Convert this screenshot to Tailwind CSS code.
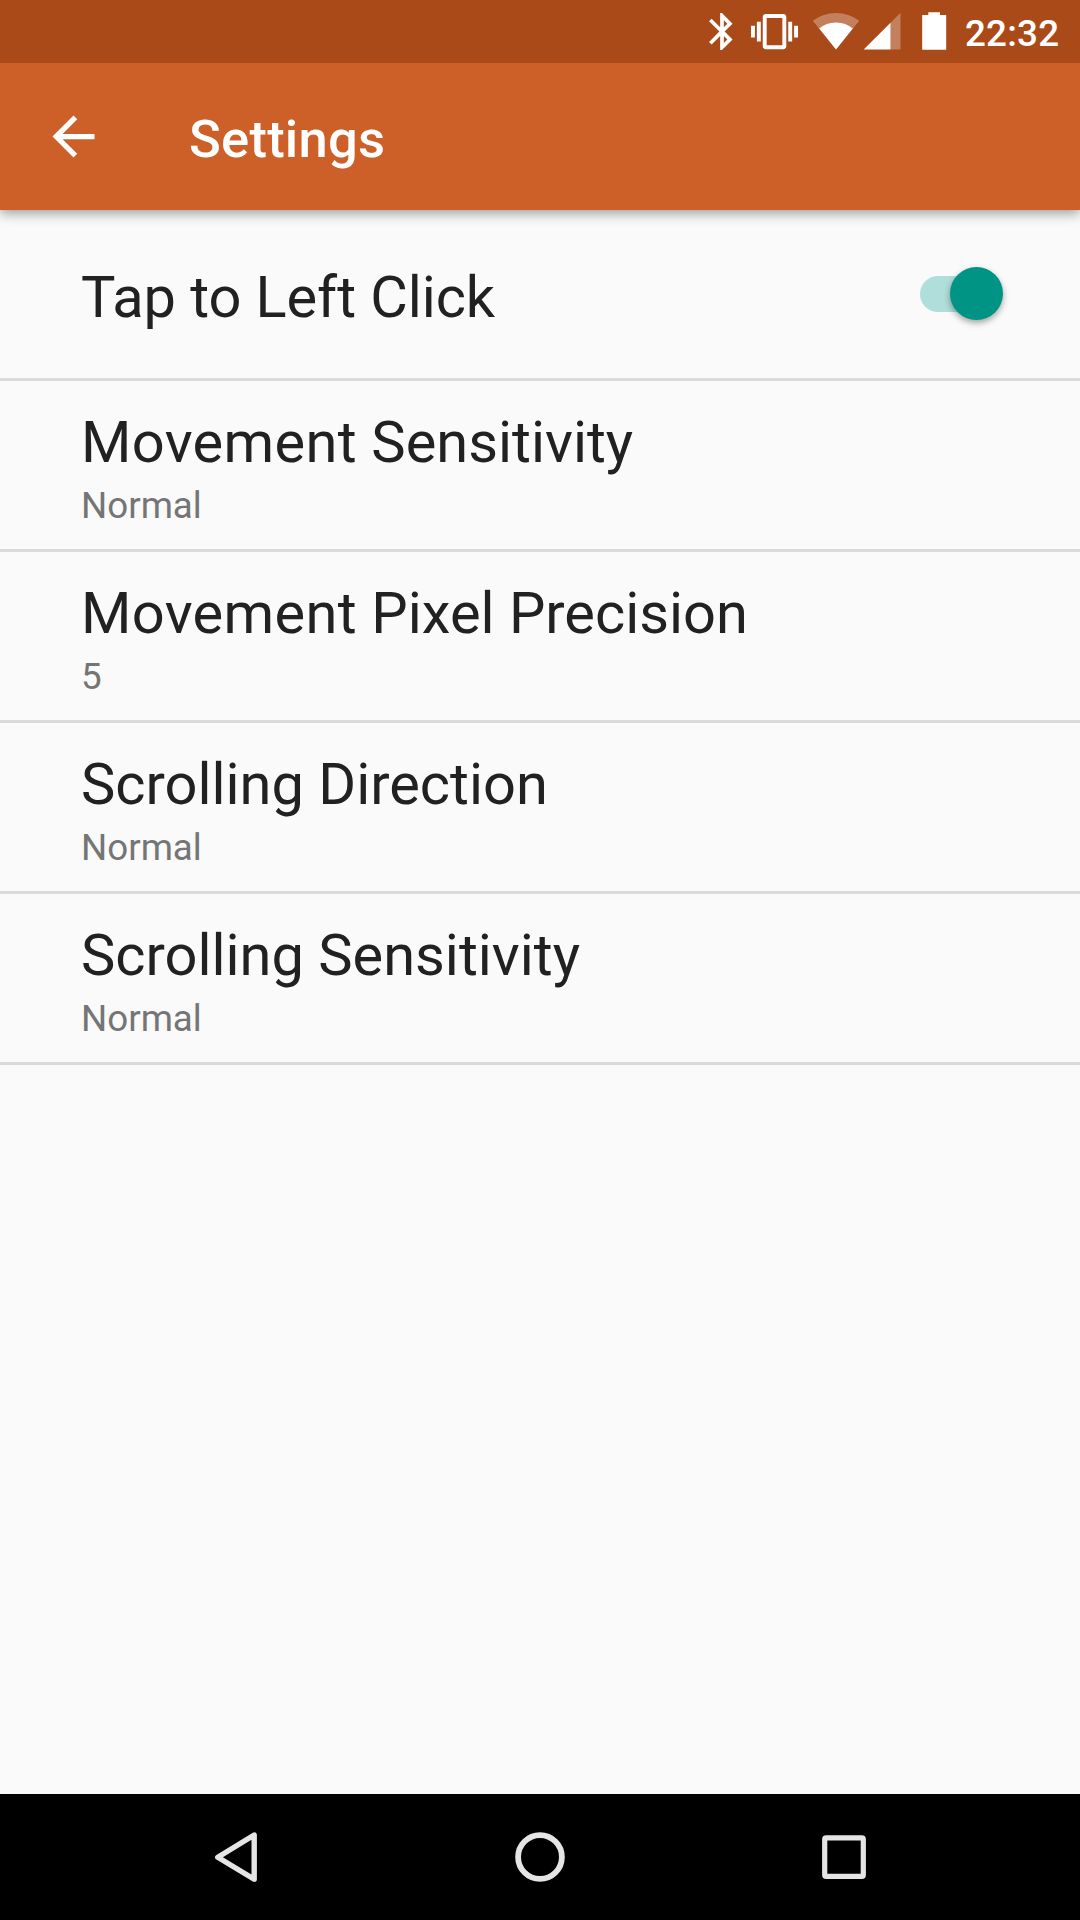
<!DOCTYPE html>
<html lang="en">
<head>
<meta charset="utf-8">
<title>Settings</title>
<script src="https://cdn.jsdelivr.net/npm/@tailwindcss/browser@4"></script>
</head>
<body class="font-['Roboto',sans-serif]">
<div class="flex h-[1920px] w-[1080px] flex-col overflow-hidden bg-[#fafafa]">
  <!-- Status bar -->
  <div class="relative z-10 flex h-[63px] shrink-0 items-start justify-end bg-[#aa4a18] text-white">
    <svg class="h-[63px] w-[255px] shrink-0" viewBox="700 0 255 63" fill="#fff">
      <path transform="translate(699.8 9.4) scale(1.85)" d="M17.71 7.71L12 2h-1v7.59L6.41 5 5 6.41 10.59 12 5 17.59 6.41 19 11 14.41V22h1l5.71-5.71-4.3-4.29 4.3-4.29zM13 5.83l1.88 1.88L13 9.59V5.83zm1.88 10.46L13 18.17v-3.76l1.88 1.88z"/>
      <path transform="translate(751 8.1) scale(1.96)" d="M0 15h2V9H0v6zm3 2h2V7H3v10zm19-8v6h2V9h-2zm-3 8h2V7h-2v10zM16.5 3h-9C6.67 3 6 3.67 6 4.5v15c0 .83.67 1.5 1.5 1.5h9c.83 0 1.5-.67 1.5-1.5v-15c0-.83-.67-1.5-1.5-1.5zM16 19H8V5h8v14z"/>
      <path fill-opacity=".3" d="M836 49.4L812.8 20.7Q823 13 836 13T859.2 20.7Z"/>
      <path d="M836 49.4L819.2 28.4Q826 22.4 836 22.4T852.8 28.4Z"/>
      <path fill-opacity=".3" d="M890.3 23V49.5H900.5V12.8Z"/>
      <path d="M863.7 49.5L890.5 22.8V49.5Z"/>
      <path d="M922.2 15H928.3V12.2H940V15H946.2V49.7H922.2Z"/>
    </svg>
    <span class="mt-3 w-[125px] pl-[10px] text-[36.75px] leading-[43px] font-medium tracking-[0.2px]">22:32</span>
  </div>
  <!-- App bar -->
  <div class="relative flex h-[147px] shrink-0 items-start bg-[#cd5f28] pl-[42px] text-white shadow-[0_3px_12px_rgba(0,0,0,0.4)]">
    <svg class="mt-[42px] size-[63px]" viewBox="0 0 24 24" fill="#fff"><path d="M20 11H7.83l5.59-5.59L12 4l-8 8 8 8 1.41-1.41L7.83 13H20v-2z"/></svg>
    <h1 class="ml-[84px] mt-[45px] text-[52.5px] leading-[62px] font-medium tracking-[0.25px]">Settings</h1>
  </div>
  <!-- Preferences -->
  <div class="flex grow flex-col text-[#212121]">
    <div class="flex h-[171px] items-start justify-between border-b-3 border-[#dadada] pr-[77px] pl-[81px]">
      <div class="mt-[53px] text-[57.75px] leading-[68px] tracking-[-0.07px]">Tap to Left Click</div>
      <div class="mt-[57px] flex h-[53px] w-[83px] items-center">
        <div class="flex h-9 w-[76px] items-center rounded-full bg-[#b0deda] pl-[30px]">
          <div class="size-[53px] shrink-0 rounded-full bg-[#009485] shadow-[0_3px_6px_rgba(0,0,0,0.35)]"></div>
        </div>
      </div>
    </div>
    <div class="h-[171px] border-b-3 border-[#dadada] pt-[27px] pl-[81px]">
      <div class="text-[57.75px] leading-[68px]"><span class="tracking-[0.35px]">Movement</span> Sensitivity</div>
      <div class="mt-2 text-[36.75px] leading-[43px] text-[#757575]">Normal</div>
    </div>
    <div class="h-[171px] border-b-3 border-[#dadada] pt-[27px] pl-[81px]">
      <div class="text-[57.75px] leading-[68px]"><span class="tracking-[0.35px]">Movement</span> Pixel Precision</div>
      <div class="mt-2 text-[36.75px] leading-[43px] text-[#757575]">5</div>
    </div>
    <div class="h-[171px] border-b-3 border-[#dadada] pt-[27px] pl-[81px]">
      <div class="text-[57.75px] leading-[68px]">Scrolling Direction</div>
      <div class="mt-2 text-[36.75px] leading-[43px] text-[#757575]">Normal</div>
    </div>
    <div class="h-[171px] border-b-3 border-[#dadada] pt-[27px] pl-[81px]">
      <div class="text-[57.75px] leading-[68px]">Scrolling Sensitivity</div>
      <div class="mt-2 text-[36.75px] leading-[43px] text-[#757575]">Normal</div>
    </div>
  </div>
  <!-- Navigation bar -->
  <div class="flex h-[126px] shrink-0 items-center justify-between bg-black pr-[204px] pl-[204px]">
    <svg class="size-[64px]" viewBox="204 1825 64 64" fill="none" stroke="#e5e5e5" stroke-width="5.4" stroke-linejoin="round"><path d="M217.8 1857.2L254.2 1835V1879.2Z"/></svg>
    <svg class="size-[64px]" viewBox="508 1825 64 64" fill="none" stroke="#e5e5e5" stroke-width="5.8"><circle cx="540" cy="1857" r="21.9"/></svg>
    <svg class="size-[64px]" viewBox="812 1825 64 64" fill="none" stroke="#e5e5e5" stroke-width="5.2"><rect x="824.7" y="1837.8" width="38.6" height="38.6" rx="1.5"/></svg>
  </div>
</div>
</body>
</html>
